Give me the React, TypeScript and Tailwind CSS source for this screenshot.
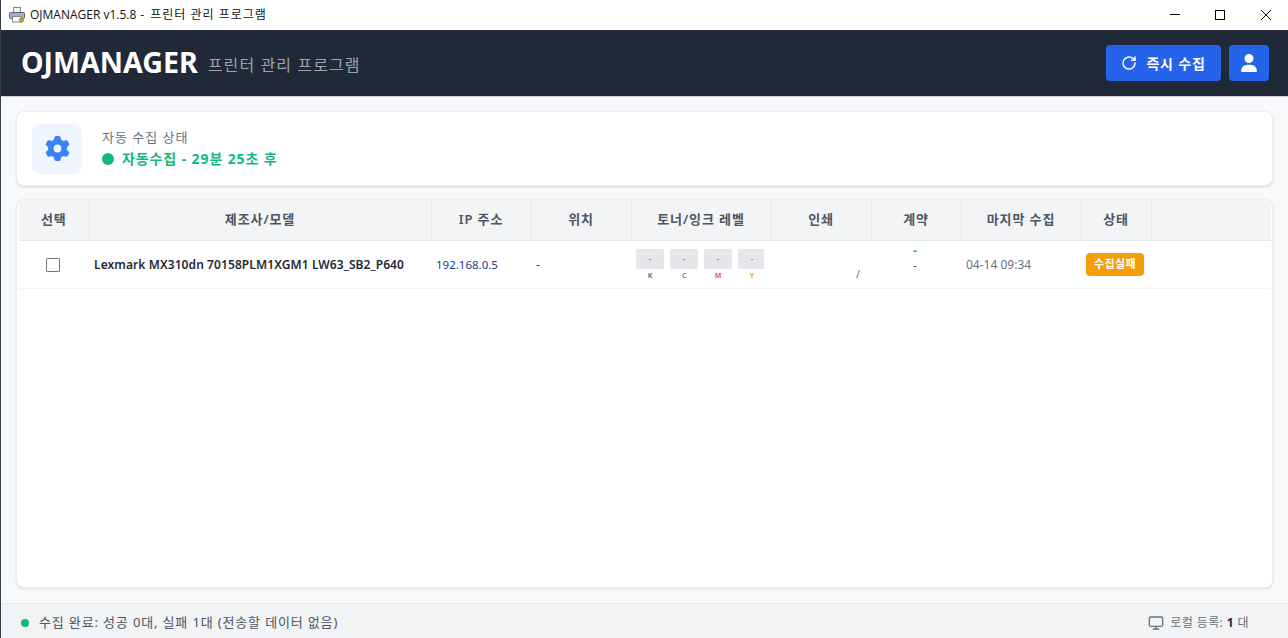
import { RotateCw, Monitor } from "lucide-react";

const font = "font-['Noto_Sans','Noto_Sans_CJK_KR',sans-serif]";

const columns = [
  { label: "선택", width: "w-[70px]" },
  { label: "제조사/모델", width: "w-[342px]" },
  { label: "IP 주소", width: "w-[100px]" },
  { label: "위치", width: "w-[100px]" },
  { label: "토너/잉크 레벨", width: "w-[140px]" },
  { label: "인쇄", width: "w-[100px]" },
  { label: "계약", width: "w-[90px]" },
  { label: "마지막 수집", width: "w-[120px]" },
  { label: "상태", width: "w-[70px]" },
];

const toners = [
  { key: "K", color: "text-[#6b7280]" },
  { key: "C", color: "text-[#06b6d4]" },
  { key: "M", color: "text-[#ec4899]" },
  { key: "Y", color: "text-[#f59e0b]" },
];

function PrinterIcon() {
  return (
    <svg width="16" height="16" viewBox="0 0 16 16">
      <rect x="4.5" y="0.5" width="7" height="5" fill="#f3f4f6" stroke="#7b8794" strokeWidth="1" />
      <rect x="0.5" y="5.5" width="15" height="6" rx="1" fill="#a3b1c2" stroke="#56647a" strokeWidth="1" />
      <rect x="3.5" y="9.5" width="9" height="5.5" fill="#f9fafb" stroke="#7b8794" strokeWidth="1" />
      <circle cx="12.5" cy="13" r="2.2" fill="#c9a227" stroke="#7a6a20" strokeWidth="0.5" />
    </svg>
  );
}

function GearIcon() {
  return (
    <svg width="26" height="26" viewBox="0 0 512 512" fill="#3b82f6" className="w-[25px] h-[25px]">
      <path d="M495.9 166.6c3.2 8.7.5 18.4-6.4 24.6l-43.3 39.4c1.1 8.3 1.7 16.8 1.7 25.4s-.6 17.1-1.7 25.4l43.3 39.4c6.9 6.2 9.6 15.9 6.4 24.6-4.4 11.9-9.7 23.3-15.8 34.3l-4.7 8.1c-6.6 11-14 21.4-22.1 31.2-5.9 7.2-15.7 9.6-24.5 6.8l-55.7-17.7c-13.4 10.3-28.2 18.9-44 25.4l-12.5 57.1c-2 9.1-9 16.3-18.2 17.8-13.8 2.3-28 3.5-42.5 3.5s-28.7-1.2-42.5-3.5c-9.2-1.5-16.2-8.7-18.2-17.8l-12.5-57.1c-15.8-6.5-30.6-15.1-44-25.4l-55.6 17.8c-8.8 2.8-18.6.3-24.5-6.8-8.1-9.8-15.5-20.2-22.1-31.2l-4.7-8.1c-6.1-11-11.4-22.4-15.8-34.3-3.2-8.7-.5-18.4 6.4-24.6l43.3-39.4c-1.1-8.4-1.7-16.9-1.7-25.5s.6-17.1 1.7-25.4l-43.3-39.4c-6.9-6.2-9.6-15.9-6.4-24.6 4.4-11.9 9.7-23.3 15.8-34.3l4.7-8.1c6.6-11 14-21.4 22.1-31.2 5.9-7.2 15.7-9.6 24.5-6.8l55.7 17.7c13.4-10.3 28.2-18.9 44-25.4l12.5-57.1c2-9.1 9-16.3 18.2-17.8C227.3 1.2 241.5 0 256 0s28.7 1.2 42.5 3.5c9.2 1.5 16.2 8.7 18.2 17.8l12.5 57.1c15.8 6.5 30.6 15.1 44 25.4l55.7-17.7c8.8-2.8 18.6-.3 24.5 6.8 8.1 9.8 15.5 20.2 22.1 31.2l4.7 8.1c6.1 11 11.4 22.4 15.8 34.3zM256 336a80 80 0 1 0 0-160 80 80 0 1 0 0 160z" />
    </svg>
  );
}

function UserIcon() {
  return (
    <svg width="16" height="18" viewBox="0 0 448 512" fill="white">
      <path d="M224 256a128 128 0 1 0 0-256 128 128 0 1 0 0 256zm-45.7 48C79.8 304 0 383.8 0 482.3 0 498.7 13.3 512 29.7 512h388.6c16.4 0 29.7-13.3 29.7-29.7C448 383.8 368.2 304 269.7 304h-91.4z" />
    </svg>
  );
}

function TonerCell() {
  return (
    <div className="flex gap-[6px] ml-[5px] mt-[2px] w-[128px] overflow-hidden">
      {toners.map(t => (
        <div key={t.key} className="flex flex-col items-center w-[28px] shrink-0">
          <div className="w-[28px] h-[20px] rounded-[2px] bg-[#e5e7eb] flex items-center justify-center text-[8px] leading-none text-[#6b7280]">-</div>
          <span className={`text-[7px] leading-[10px] mt-[2px] font-bold ${t.color}`}>{t.key}</span>
        </div>
      ))}
    </div>
  );
}

export default function App() {
  return (
    <div className={`${font} w-[1288px] h-[638px] flex flex-col overflow-hidden bg-[#f8f9fb] border-l border-l-[#3a3f45]`}>
      {/* Window title bar */}
      <div className="h-[30px] shrink-0 bg-white flex items-center">
        <div className="ml-[8px]"><PrinterIcon /></div>
        <span className="ml-[5px] text-[12px] text-[#111] font-['Open_Sans','Noto_Sans_CJK_KR',sans-serif] whitespace-nowrap">
          OJMANAGER v1.5.8<span className="ml-[4px]">-</span><span className="ml-[6px] tracking-[1px]">프린터 관리 프로그램</span>
        </span>
        <div className="ml-auto mr-[17px] flex items-center">
          <svg width="10" height="10" viewBox="0 0 10 10" stroke="black" strokeWidth="1" fill="none">
            <path d="M0 4.5H10" />
          </svg>
          <svg width="10" height="10" viewBox="0 0 10 10" stroke="black" strokeWidth="1" fill="none" className="ml-[35px]">
            <rect x="0.5" y="0.5" width="9" height="9" />
          </svg>
          <svg width="10" height="10" viewBox="0 0 10 10" stroke="black" strokeWidth="1" fill="none" className="ml-[36px]">
            <path d="M0 0L10 10M10 0L0 10" />
          </svg>
        </div>
      </div>

      {/* Header */}
      <header className="h-[67px] shrink-0 bg-[#1f2937] flex items-center pl-[20px] pr-[19px] border-b border-b-[#d1d5db]">
        <h1 className="text-[28.6px] font-bold text-white leading-none -mt-[2px]">OJMANAGER</h1>
        <span className="ml-[10px] mt-[3px] text-[16px] tracking-[1.1px] text-[#9ca3af]">프린터 관리 프로그램</span>
        <button className="ml-auto h-[36px] w-[115px] rounded-[4px] bg-[#2563eb] text-white flex items-center justify-center gap-[9px] text-[14px] font-semibold tracking-[0.8px]">
          <RotateCw size={16} strokeWidth={2.2} />
          즉시 수집
        </button>
        <button className="ml-[8px] h-[36px] w-[40px] rounded-[4px] bg-[#2563eb] flex items-center justify-center">
          <UserIcon />
        </button>
      </header>

      {/* Main */}
      <main className="flex-1 min-h-0 flex flex-col pl-[15px] pr-[15px] pt-[14px] pb-[15px] gap-[13px]">
        <section className="h-[75px] shrink-0 bg-white rounded-[8px] border border-[#eceef1] shadow-sm flex items-center pl-[15px]">
          <div className="w-[50px] h-[50px] rounded-[8px] bg-[#eff6ff] flex items-center justify-center">
            <GearIcon />
          </div>
          <div className="ml-[20px] -mt-[2px]">
            <div className="text-[13px] leading-[20px] tracking-[1px] text-[#6b7280]">자동 수집 상태</div>
            <div className="flex items-center mt-[2px]">
              <span className="w-[12px] h-[12px] rounded-full bg-[#10b981]" />
              <span className="ml-[8px] text-[14px] leading-[20px] font-bold tracking-[0.9px] text-[#10b981]">자동수집 - 29분 25초 후</span>
            </div>
          </div>
        </section>

        <section className="flex-1 min-h-0 bg-white rounded-[8px] border border-[#eceef1] shadow-sm overflow-hidden pl-[2px] pr-[1px]">
          <table className="w-full table-fixed border-collapse">
            <thead>
              <tr className="h-[40px] bg-[#f3f4f6] border-b border-b-[#e5e7eb]">
                {columns.map(c => (
                  <th key={c.label} className={`${c.width} border-r border-r-[#e5e7eb] text-[13px] font-semibold tracking-[0.9px] text-[#4b5563] text-center`}>{c.label}</th>
                ))}
                <th />
              </tr>
            </thead>
            <tbody>
              <tr className="h-[48px] border-b border-b-[#f3f4f6]">
                <td className="text-center pr-[2px] pb-[2px]">
                  <input type="checkbox" readOnly className="appearance-none w-[14px] h-[14px] border border-[#767676] rounded-[1px] bg-white align-middle" />
                </td>
                <td className="pl-[5px] pt-[1px] text-[12px] font-semibold tracking-[0.09px] text-[#1f2937] whitespace-nowrap">Lexmark MX310dn 70158PLM1XGM1 LW63_SB2_P640</td>
                <td className="pl-[5px] pt-[1px] text-[11.5px] text-[#1e3a8a]">192.168.0.5</td>
                <td className="pl-[5px] pt-[1px] text-[12px] text-[#374151]">-</td>
                <td><TonerCell /></td>
                <td className="text-right pr-[11px] pt-[20px] text-[11px] text-[#6b7280]">/</td>
                <td className="text-center text-[12px] leading-[15px] text-[#4b5563] pb-[13px] pr-[2px]">
                  <div className="text-[#10b981] font-bold">-</div>
                  <div>-</div>
                </td>
                <td className="pl-[5px] pt-[1px] text-[12px] text-[#6b7280]">04-14 09:34</td>
                <td className="pl-[5px] pb-[2px]">
                  <span className="inline-flex items-center justify-center w-[58px] h-[23px] rounded-[4px] bg-[#f59e0b] text-white text-[11px] font-semibold tracking-[0.4px]">수집실패</span>
                </td>
                <td />
              </tr>
            </tbody>
          </table>
        </section>
      </main>

      {/* Status bar */}
      <footer className="h-[35px] shrink-0 bg-[#f1f3f5] border-t border-t-[#e5e7eb] flex items-center pt-[4px] pl-[20px] pr-[39px] text-[#4b5563]">
        <span className="w-[8px] h-[8px] rounded-full bg-[#10b981]" />
        <span className="ml-[10px] text-[13px] tracking-[0.85px]">수집 완료: 성공 0대, 실패 1대 (전송할 데이터 없음)</span>
        <div className="ml-auto flex items-center text-[12px] tracking-[0.4px] text-[#6b7280]">
          <Monitor size={16} strokeWidth={2} />
          <span className="ml-[6px]">로컬 등록: <b className="text-[#1f2937]">1</b> 대</span>
        </div>
      </footer>
    </div>
  );
}
